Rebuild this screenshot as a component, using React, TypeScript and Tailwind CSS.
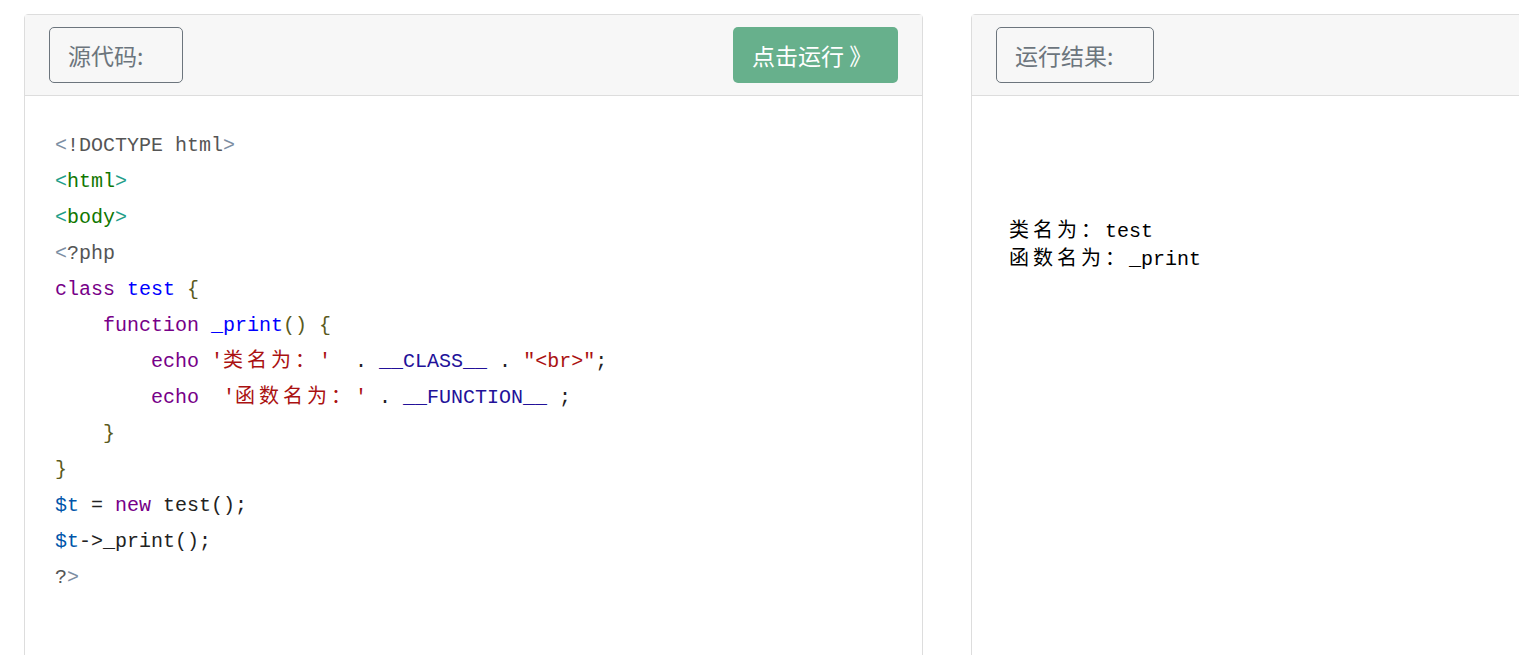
const mono = { fontFamily: '"Liberation Mono", "Noto Sans CJK SC", monospace' };

type Tok = [string, string];

// code colours
const meta = "text-[#555555]";
const angle = "text-[#7c8ea3]";
const tagB = "text-[#1f9e8a]";
const tag = "text-[#117700]";
const kw = "text-[#770088]";
const def = "text-[#0000ff]";
const br = "text-[#5a5a20]";
const str = "text-[#aa1111]";
const atom = "text-[#221199]";
const vr = "text-[#0055aa]";
const plain = "text-[#222222]";

const lines: Tok[][] = [
  [[angle, "<"], [meta, "!DOCTYPE html"], [angle, ">"]],
  [[tagB, "<"], [tag, "html"], [tagB, ">"]],
  [[tagB, "<"], [tag, "body"], [tagB, ">"]],
  [[angle, "<"], [meta, "?php"]],
  [[kw, "class "], [def, "test"], [br, " {"]],
  [[plain, "    "], [kw, "function "], [def, "_print"], [br, "() {"]],
  [
    [plain, "        "],
    [kw, "echo "],
    [str, "'"],
    [str, "类名为："],
    [str, "'"],
    [plain, "  . "],
    [atom, "__CLASS__"],
    [plain, " . "],
    [str, "\"<br>\""],
    [plain, ";"],
  ],
  [
    [plain, "        "],
    [kw, "echo  "],
    [str, "'"],
    [str, "函数名为："],
    [str, "'"],
    [plain, " . "],
    [atom, "__FUNCTION__"],
    [plain, " ;"],
  ],
  [[plain, "    "], [br, "}"]],
  [[br, "}"]],
  [[vr, "$t"], [plain, " = "], [kw, "new"], [plain, " test();"]],
  [[vr, "$t"], [plain, "->_print();"]],
  [[meta, "?"], [angle, ">"]],
];

const isCjk = (s: string) => /[\u3000-\u9fff\uff00-\uffef]/.test(s);

function Code() {
  return (
    <div className="whitespace-pre text-[20px] leading-[36px]" style={mono}>
      {lines.map((toks, i) => (
        <div key={i}>
          {toks.map(([c, t], j) => (
            <span key={j} className={isCjk(t) ? `${c} tracking-[4px]` : c}>
              {t}
            </span>
          ))}
        </div>
      ))}
    </div>
  );
}

function Label({ text, w }: { text: string; w: string }) {
  return (
    <div
      className={`${w} h-[56px] flex items-center pl-[18px] border border-[#6c757d] rounded-[5px] text-[23px] text-[#6c757d]`}
    >
      {text}
    </div>
  );
}

export default function App() {
  const cjk = { fontFamily: '"Noto Sans CJK SC", "Noto Sans", sans-serif' };
  return (
    <div className="w-full h-screen overflow-hidden bg-white" style={cjk}>
      <div className="flex gap-[48px] pt-[14px] pl-[24px]">
        {/* source panel */}
        <div className="w-[899px] h-[700px] shrink-0 border border-[#dddddd] rounded-t-[4px] flex flex-col">
          <div className="h-[81px] bg-[#f7f7f7] border-b border-[#dddddd] flex items-center justify-between px-[24px]">
            <Label text="源代码:" w="w-[134px]" />
            <button className="w-[165px] h-[56px] rounded-[5px] bg-[#67b08c] text-white text-[23px] text-left pl-[19px]">
              点击运行 》
            </button>
          </div>
          <div className="pt-[32px] pl-[30px]">
            <Code />
          </div>
        </div>

        {/* result panel */}
        <div className="w-[899px] h-[700px] shrink-0 border border-[#dddddd] rounded-t-[4px] flex flex-col">
          <div className="h-[81px] bg-[#f7f7f7] border-b border-[#dddddd] flex items-center px-[24px]">
            <Label text="运行结果:" w="w-[158px]" />
          </div>
          <div className="pt-[122px] pl-[37px] text-[20px] leading-[28px] text-black" style={mono}>
            <div>
              <span className="tracking-[4px]">类名为：</span>test
            </div>
            <div>
              <span className="tracking-[4px]">函数名为：</span>_print
            </div>
          </div>
        </div>
      </div>
    </div>
  );
}
